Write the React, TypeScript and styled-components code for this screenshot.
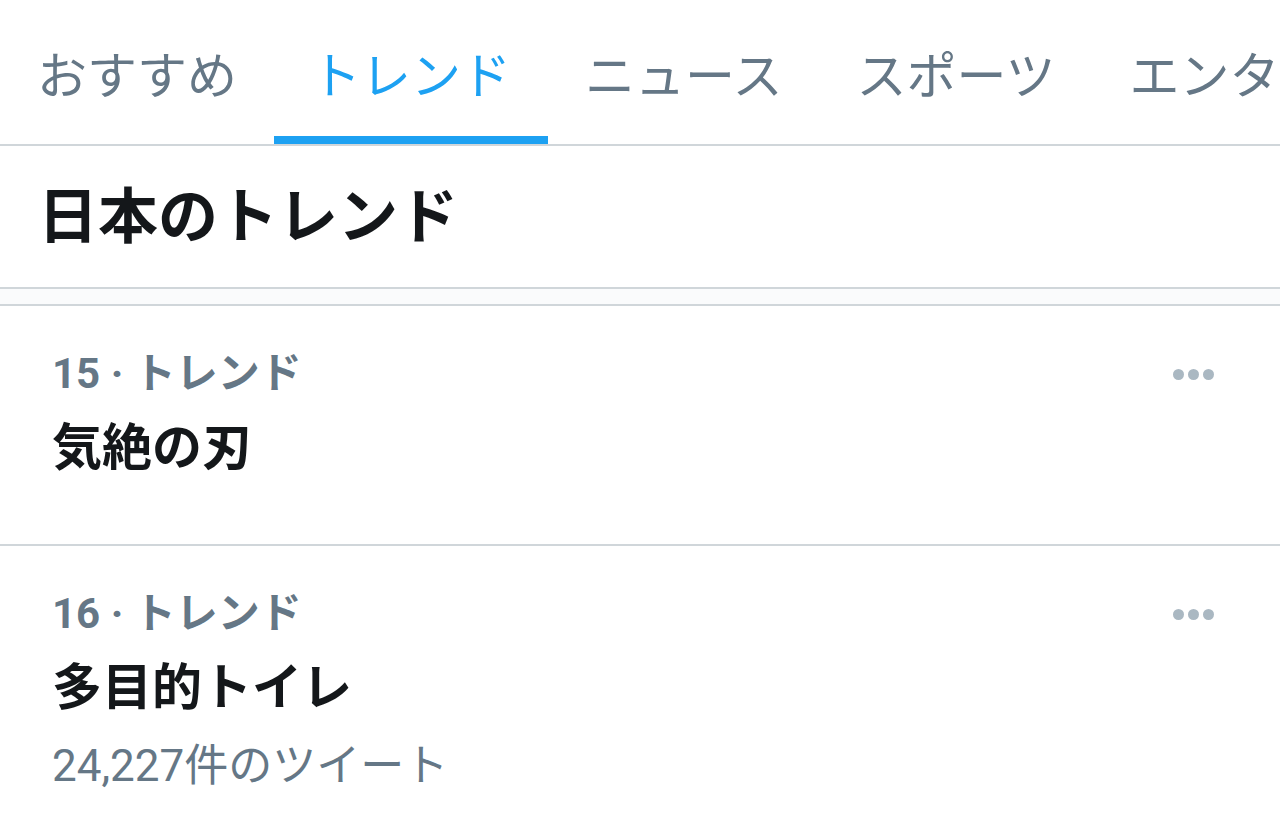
import React from "react";
import styled, { createGlobalStyle } from "styled-components";

const Global = createGlobalStyle`
  html, body { margin: 0; padding: 0; background: #ffffff; }
  body { font-family: Roboto, "Noto Sans CJK JP", sans-serif; overflow: hidden; }
`;

const Page = styled.div`
  width: 1280px;
  height: 829px;
  overflow: hidden;
  background: #ffffff;
`;

const TabBar = styled.nav`
  display: flex;
  height: 144px;
  border-bottom: 2px solid #d0d6da;
  white-space: nowrap;
  overflow: hidden;
`;

const Tab = styled.div<{ $active?: boolean }>`
  position: relative;
  display: flex;
  align-items: center;
  flex-shrink: 0;
  padding: 0 37px 0 37px;
  font-family: "Noto Sans CJK JP", sans-serif;
  font-size: 50px;
  font-weight: 400;
  color: ${(p) => (p.$active ? "#1da1f2" : "#657786")};
  &::after {
    content: "";
    display: ${(p) => (p.$active ? "block" : "none")};
    position: absolute;
    left: 0;
    right: 0;
    bottom: -1px;
    height: 9px;
    background: #1da1f2;
  }
`;

const Header = styled.h1`
  margin: 0;
  height: 143px;
  box-sizing: border-box;
  display: flex;
  align-items: center;
  padding: 0 0 10px 38px;
  font-family: "Noto Sans CJK JP", sans-serif;
  font-size: 60px;
  font-weight: 700;
  color: #14171a;
  border-bottom: 2px solid #d0d6da;
`;

const Spacer = styled.div`
  height: 15px;
  background: #fafbfc;
  border-bottom: 2px solid #d0d6da;
`;

const Item = styled.div`
  position: relative;
  min-height: 198px;
  padding: 40px 52px 0 52px;
  border-bottom: 2px solid #d0d6da;
  &:last-child { border-bottom: none; }
`;

const Meta = styled.div`
  font-family: Roboto, "Noto Sans CJK JP", sans-serif;
  font-size: 42px;
  font-weight: 700;
  line-height: 56px;
  color: #657786;
`;

const Title = styled.div`
  margin-top: 11px;
  font-family: "Noto Sans CJK JP", sans-serif;
  font-size: 50px;
  font-weight: 700;
  line-height: 60px;
  color: #14171a;
`;

const Count = styled.div`
  margin-top: 25px;
  font-family: Roboto, "Noto Sans CJK JP", sans-serif;
  font-size: 44px;
  font-weight: 400;
  line-height: 56px;
  color: #657786;
`;

const More = styled.div`
  position: absolute;
  top: 63px;
  right: 66px;
  display: flex;
  gap: 4px;
`;

const Dot = styled.span`
  width: 11px;
  height: 11px;
  border-radius: 50%;
  background: #aab8c2;
`;

const tabs = ["おすすめ", "トレンド", "ニュース", "スポーツ", "エンタメ"];

const trends = [
  { rank: 15, name: "気絶の刃" },
  { rank: 16, name: "多目的トイレ", count: "24,227件のツイート" },
];

export default function App() {
  return (
    <Page>
      <Global />
      <TabBar>
        {tabs.map((t) => (
          <Tab key={t} $active={t === "トレンド"}>
            {t}
          </Tab>
        ))}
      </TabBar>
      <Header>日本のトレンド</Header>
      <Spacer />
      {trends.map((tr) => (
        <Item key={tr.rank}>
          <Meta>{tr.rank} · トレンド</Meta>
          <Title>{tr.name}</Title>
          {tr.count && <Count>{tr.count}</Count>}
          <More>
            <Dot />
            <Dot />
            <Dot />
          </More>
        </Item>
      ))}
    </Page>
  );
}
